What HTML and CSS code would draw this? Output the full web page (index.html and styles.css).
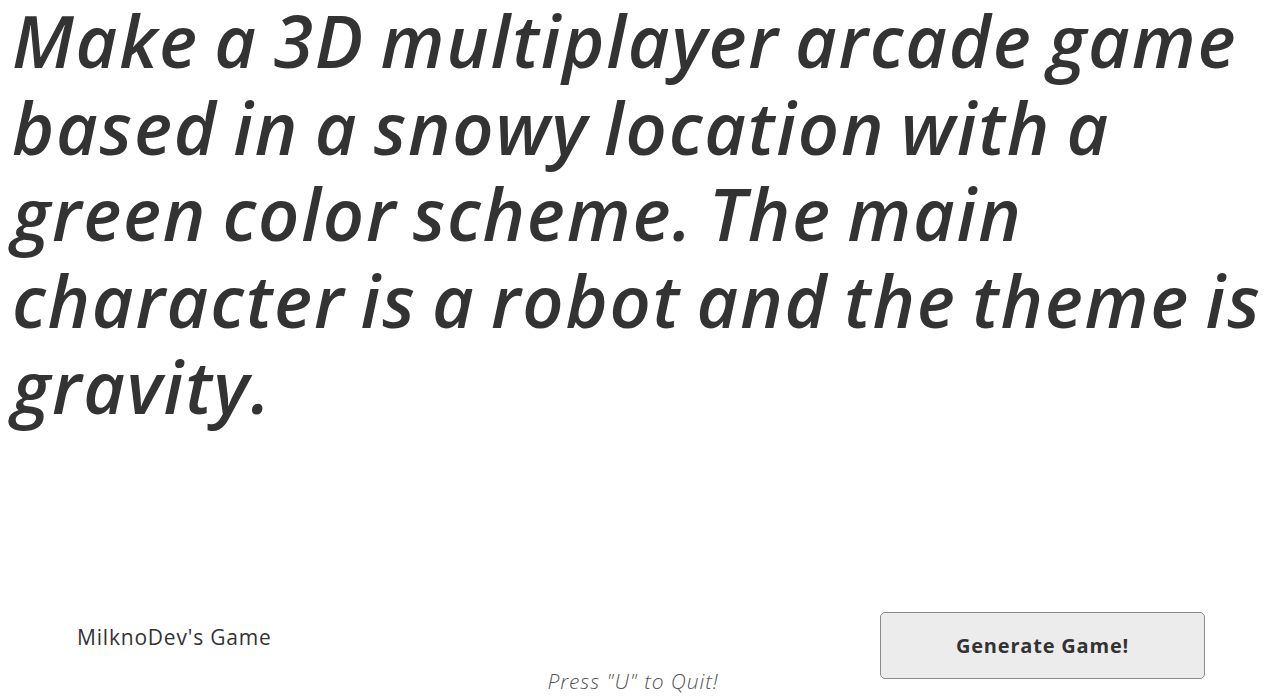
FILE: index.html
```html
<!DOCTYPE html>
<html>
<head>
<meta charset="utf-8">
<link rel="stylesheet" href="styles.css">
</head>
<body>
<div class="page">
  <main class="prompt">
    <p class="prompt-text">Make a 3D multiplayer arcade game<br>based in a snowy location with a<br>green color scheme. The main<br>character is a robot and the theme is<br>gravity.</p>
  </main>
  <footer class="footer">
    <div class="title">MilknoDev's Game</div>
    <div class="quit">Press "U" to Quit!</div>
    <button class="generate">Generate Game!</button>
  </footer>
</div>
</body>
</html>
```
FILE: styles.css
```css
html, body {
  margin: 0;
  padding: 0;
  background: #ffffff;
}
.page {
  width: 1280px;
  height: 698px;
  display: flex;
  flex-direction: column;
  overflow: hidden;
  font-family: "Open Sans", "Noto Sans", sans-serif;
  color: #333333;
}
.prompt {
  flex: 1;
  padding: 0 0 0 12px;
}
.prompt-text {
  margin: -3px 0 0 0;
  font-size: 72px;
  line-height: 86.5px;
  letter-spacing: 1.8px;
  word-spacing: -5px;
  white-space: nowrap;
  font-style: italic;
  font-weight: 600;
  color: #333333;
}
.footer {
  height: 86px;
  display: grid;
  grid-template-columns: 1fr auto 1fr;
  align-items: start;
}
.title {
  justify-self: start;
  padding-left: 77px;
  margin-top: 12px;
  font-size: 21px;
  line-height: 26px;
  letter-spacing: 0.8px;
  font-weight: 500;
  color: #333333;
}
.quit {
  align-self: end;
  margin-bottom: 4px;
  margin-right: 14px;
  font-size: 21px;
  line-height: 26px;
  letter-spacing: 0.9px;
  font-style: italic;
  font-weight: 300;
  color: #555555;
}
.generate {
  justify-self: end;
  margin-right: 75px;
  width: 325px;
  height: 67px;
  background: #ececec;
  border: 1px solid #8a8a8a;
  border-radius: 5px;
  font-family: "Open Sans", "Noto Sans", sans-serif;
  font-size: 20px;
  font-weight: 700;
  letter-spacing: 0.8px;
  color: #333333;
  padding: 0;
}
```
